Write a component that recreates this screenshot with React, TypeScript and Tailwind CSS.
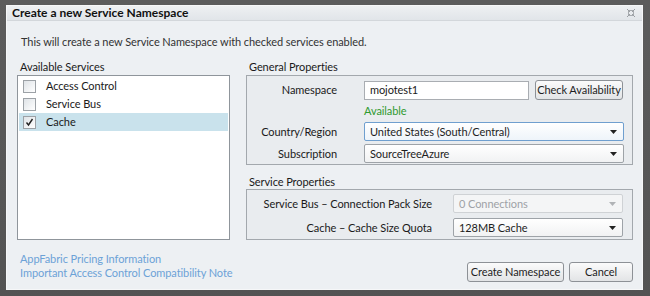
import React from "react";

const services = [
  { name: "Access Control", checked: false },
  { name: "Service Bus", checked: false },
  { name: "Cache", checked: true },
];

function CheckBox({ checked }: { checked: boolean }) {
  return (
    <div className="w-[13px] h-[13px] border border-[#9ca1a6] bg-gradient-to-br from-[#dfe3e7] to-[#ffffff] flex items-center justify-center">
      {checked && (
        <svg width="9" height="9" viewBox="0 0 9 9">
          <path d="M1.5 4.5 L3.5 7 L7.5 1" fill="none" stroke="#222" strokeWidth="1.4" />
        </svg>
      )}
    </div>
  );
}

function Arrow({ color = "#222" }: { color?: string }) {
  return (
    <svg width="7" height="4" viewBox="0 0 7 4">
      <path d="M0 0 H7 L3.5 4 Z" fill={color} />
    </svg>
  );
}

function Select({ value, width, focus, disabled }: { value: string; width: string; focus?: boolean; disabled?: boolean }) {
  const cls = disabled
    ? "bg-[#f4f5f6] border-[#cfd2d5] text-[#9ea2a6]"
    : focus
    ? "bg-gradient-to-b from-[#ffffff] to-[#eef4fa] border-[#6f9fcf] text-[#1e1e1e]"
    : "bg-gradient-to-b from-[#ffffff] to-[#f1f2f3] border-[#9ea3a8] text-[#1e1e1e]";
  return (
    <div className={`${width} h-[19px] border rounded-[2px] flex items-center justify-between pl-[5px] pr-[6px] ${cls}`}>
      <span>{value}</span>
      <Arrow color={disabled ? "#b0b3b6" : "#222"} />
    </div>
  );
}

function Button({ label, width }: { label: string; width: string }) {
  return (
    <div className={`${width} h-[20px] border border-[#8d9196] rounded-[3px] bg-gradient-to-b from-[#fbfbfb] to-[#e2e4e6] flex items-center justify-center text-[#1e1e1e]`}>
      {label}
    </div>
  );
}

export default function App() {
  return (
    <div className="w-[650px] h-[296px] bg-gradient-to-b from-[#5c5c5c] to-[#535353] pt-[5px] pl-[6px] pr-[7px] pb-[6px] font-['Lato','Liberation_Sans',sans-serif] text-[11px] leading-[14px] tracking-[-0.08px] text-[#1a1a1a]">
      <div className="h-full flex flex-col bg-[#edf0f3] border border-[#f6f7f8]">
        <div className="h-[15px] shrink-0 flex items-center justify-between pl-[5px] pr-[7px] bg-gradient-to-b from-[#eef0f2] to-[#e1e5e9] border-b border-[#d3d7db]">
          <span className="font-bold text-[12px] tracking-normal text-[#111]">Create a new Service Namespace</span>
          <svg width="8" height="8" viewBox="0 0 8 8">
            <rect x="1.5" y="1.5" width="5" height="5" fill="none" stroke="#a7abaf" />
            <path d="M0 0 L3 3 M8 0 L5 3 M0 8 L3 5 M8 8 L5 5" stroke="#9a9ea2" />
          </svg>
        </div>

        <div className="flex-1 flex flex-col pl-[10px] pr-[9px]">
          <div className="mt-[14px] pl-[4px] text-[#333]">
            This will create a new Service Namespace with checked services enabled.
          </div>

          <div className="mt-[11px] flex gap-[16px]">
            <div className="w-[213px] flex flex-col">
              <div className="pl-[3px]">Available Services</div>
              <div className="mt-[1px] h-[165px] border border-[#8f959b] bg-white p-[1px]">
                {services.map((s) => (
                  <div
                    key={s.name}
                    className={`h-[18px] flex items-center gap-[10px] pl-[4px] ${s.checked ? "bg-[#c9e2ec]" : ""}`}
                  >
                    <CheckBox checked={s.checked} />
                    <span>{s.name}</span>
                  </div>
                ))}
              </div>
            </div>

            <div className="w-[387px] flex flex-col">
              <div className="pl-[3px]">General Properties</div>
              <div className="mt-[1px] h-[90px] border border-[#a3a8ad] bg-[#e9ecef] pt-[4px] flex flex-col">
                <div className="flex items-center">
                  <div className="w-[90px] text-right">Namespace</div>
                  <div className="ml-[27px] w-[165px] h-[19px] border border-[#a9adb2] bg-white flex items-center pl-[5px]">
                    mojotest1
                  </div>
                  <div className="ml-[6px]">
                    <Button label="Check Availability" width="w-[88px]" />
                  </div>
                </div>
                <div className="mt-[4px] pl-[117px] text-[#2f9a2f]">Available</div>
                <div className="mt-[4px] flex items-center">
                  <div className="w-[90px] text-right">Country/Region</div>
                  <div className="ml-[27px]">
                    <Select value="United States (South/Central)" width="w-[260px]" focus />
                  </div>
                </div>
                <div className="mt-[3px] flex items-center">
                  <div className="w-[90px] text-right">Subscription</div>
                  <div className="ml-[27px]">
                    <Select value="SourceTreeAzure" width="w-[260px]" />
                  </div>
                </div>
              </div>

              <div className="mt-[10px] pl-[3px]">Service Properties</div>
              <div className="h-[51px] border border-[#a3a8ad] bg-[#e9ecef] pt-[4px] flex flex-col">
                <div className="flex items-center">
                  <div className="w-[185px] text-right">Service Bus – Connection Pack Size</div>
                  <div className="ml-[21px]">
                    <Select value="0 Connections" width="w-[170px]" disabled />
                  </div>
                </div>
                <div className="mt-[5px] flex items-center">
                  <div className="w-[185px] text-right">Cache – Cache Size Quota</div>
                  <div className="ml-[21px]">
                    <Select value="128MB Cache" width="w-[170px]" />
                  </div>
                </div>
              </div>
            </div>
          </div>

          <div className="mt-[12px] flex justify-between items-start">
            <div className="pl-[3px] flex flex-col text-[#6ca2d7]">
              <span>AppFabric Pricing Information</span>
              <span>Important Access Control Compatibility Note</span>
            </div>
            <div className="mt-[10px] flex gap-[5px]">
              <Button label="Create Namespace" width="w-[97px]" />
              <Button label="Cancel" width="w-[64px]" />
            </div>
          </div>
        </div>
      </div>
    </div>
  );
}
